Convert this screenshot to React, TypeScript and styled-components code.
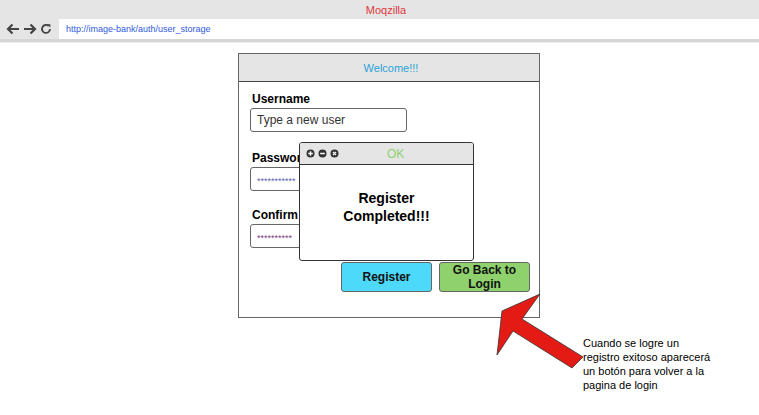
import React from 'react';
import styled, { createGlobalStyle } from 'styled-components';

const GlobalStyle = createGlobalStyle`
  html, body {
    margin: 0;
    padding: 0;
    background: #ffffff;
    font-family: "Liberation Sans", Arial, sans-serif;
  }
`;

const App: React.FC = () => {
  return (
    <>
      <GlobalStyle />
      <Browser>
        <TitleBar>Moqzilla</TitleBar>
        <NavRow>
          <NavIcons>
            <svg width="14" height="12" viewBox="0 0 14 12">
              <path d="M13 6H2M6.5 1.5L2 6l4.5 4.5" stroke="#444" strokeWidth="2.2" fill="none" />
            </svg>
            <svg width="14" height="12" viewBox="0 0 14 12">
              <path d="M1 6h11M7.5 1.5L12 6l-4.5 4.5" stroke="#444" strokeWidth="2.2" fill="none" />
            </svg>
            <svg width="12" height="12" viewBox="0 0 12 12">
              <path d="M10 6a4 4 0 1 1-1.3-3" stroke="#444" strokeWidth="1.8" fill="none" />
              <path d="M7 1.2h3.4v3.4z" fill="#444" />
            </svg>
          </NavIcons>
          <AddressField>http://image-bank/auth/user_storage</AddressField>
        </NavRow>
        <ChromeEdge />
        <Page>
          <Card>
            <CardHeader>Welcome!!!</CardHeader>
            <Form>
              <Label>Username</Label>
              <Field>Type a new user</Field>
              <Label $top={19}>Password</Label>
              <Field $mask="#5a5fb0">***********</Field>
              <Label $top={17}>Confirm Password</Label>
              <Field $mask="#7a3a80">**********</Field>
              <Actions>
                <ActionButton $bg="#4dd9fa">Register</ActionButton>
                <ActionButton $bg="#8fd16d">Go Back to<br />Login</ActionButton>
              </Actions>
            </Form>
            <Modal>
              <ModalHeader>
                <WindowDots>
                  <svg width="34" height="9" viewBox="0 0 34 9">
                    <circle cx="4.5" cy="4.5" r="4" fill="#333" />
                    <path d="M4.5 2.2v4.6M2.2 4.5h4.6" stroke="#fff" strokeWidth="1.4" />
                    <circle cx="16.5" cy="4.5" r="4" fill="#333" />
                    <path d="M14.2 4.5h4.6" stroke="#fff" strokeWidth="1.4" />
                    <circle cx="28.5" cy="4.5" r="4" fill="#333" />
                    <path d="M26.9 2.9l3.2 3.2M30.1 2.9l-3.2 3.2" stroke="#fff" strokeWidth="1.3" />
                  </svg>
                </WindowDots>
                <ModalTitle>OK</ModalTitle>
              </ModalHeader>
              <ModalBody>Register<br />Completed!!!</ModalBody>
            </Modal>
          </Card>
          <Arrow width="100" height="90" viewBox="490 285 100 90">
            <polygon
              points="540,294 522,319 583,357 572,368 513,331 497,355 502,311"
              fill="#e31b14"
              stroke="#333"
              strokeWidth="0.8"
              strokeLinejoin="miter"
            />
          </Arrow>
          <Note>
            Cuando se logre un<br />
            registro exitoso aparecerá<br />
            un botón para volver a la<br />
            pagina de login
          </Note>
        </Page>
      </Browser>
    </>
  );
};

const Browser = styled.div`
  width: 759px;
  height: 415px;
  display: flex;
  flex-direction: column;
  overflow: hidden;
`;

const TitleBar = styled.div`
  height: 19px;
  background: #e5e5e5;
  color: #e0383d;
  font-size: 11px;
  display: flex;
  align-items: center;
  justify-content: center;
  padding-left: 13px;
`;

const NavRow = styled.div`
  height: 20px;
  background: #e5e5e5;
  display: flex;
  align-items: stretch;
`;

const NavIcons = styled.div`
  width: 59px;
  display: flex;
  align-items: center;
  gap: 3px;
  padding-left: 6px;
  box-sizing: border-box;
`;

const AddressField = styled.div`
  flex: 1;
  background: #ffffff;
  color: #2f5be0;
  font-size: 9px;
  display: flex;
  align-items: center;
  padding-left: 7px;
`;

const ChromeEdge = styled.div`
  height: 3px;
  background: #d6d6d6;
  border-bottom: 1px solid #ececec;
`;

const Page = styled.div`
  position: relative;
  flex: 1;
  padding: 10px 0 0 238px;
`;

const Card = styled.div`
  position: relative;
  width: 302px;
  height: 265px;
  box-sizing: border-box;
  border: 1px solid #666;
  display: flex;
  flex-direction: column;
`;

const CardHeader = styled.div`
  height: 27px;
  background: #e5e5e5;
  border-bottom: 1px solid #444;
  color: #2aa3d8;
  font-size: 11px;
  display: flex;
  align-items: center;
  justify-content: center;
  padding-left: 4px;
`;

const Form = styled.div`
  display: flex;
  flex-direction: column;
  align-items: flex-start;
  padding: 10px 0 0 11px;
`;

const Label = styled.div<{ $top?: number }>`
  font-size: 12px;
  font-weight: bold;
  color: #000;
  margin-top: ${(p) => p.$top ?? 0}px;
  margin-left: 2px;
  height: 14px;
`;

const Field = styled.div<{ $mask?: string }>`
  width: 157px;
  height: 24px;
  box-sizing: border-box;
  margin-top: 2px;
  border: 1px solid #666;
  border-radius: 3px;
  padding-left: 6px;
  display: flex;
  align-items: center;
  font-size: ${(p) => (p.$mask ? '9px' : '12px')};
  color: ${(p) => p.$mask ?? '#333'};
  padding-top: ${(p) => (p.$mask ? '4px' : '0')};
`;

const Actions = styled.div`
  display: flex;
  gap: 7px;
  margin-top: 14px;
  margin-left: 91px;
`;

const ActionButton = styled.div<{ $bg: string }>`
  width: 91px;
  height: 30px;
  box-sizing: border-box;
  background: ${(p) => p.$bg};
  border: 1px solid #666;
  border-radius: 3px;
  font-size: 12px;
  font-weight: bold;
  line-height: 14px;
  color: #111;
  display: flex;
  align-items: center;
  justify-content: center;
  text-align: center;
`;

const Modal = styled.div`
  position: absolute;
  left: 60px;
  top: 88px;
  width: 175px;
  height: 119px;
  box-sizing: border-box;
  border: 1px solid #333;
  border-radius: 3px;
  background: #fff;
  display: flex;
  flex-direction: column;
  overflow: hidden;
`;

const ModalHeader = styled.div`
  height: 21px;
  background: #e5e5e5;
  border-bottom: 1px solid #333;
  display: flex;
  align-items: center;
  padding-left: 6px;
  flex-shrink: 0;
`;

const WindowDots = styled.div`
  display: flex;
  align-items: center;
`;

const ModalTitle = styled.div`
  color: #8fd16d;
  font-size: 12px;
  margin-left: 47px;
`;

const ModalBody = styled.div`
  flex: 1;
  display: flex;
  align-items: center;
  justify-content: center;
  text-align: center;
  font-size: 14px;
  font-weight: bold;
  line-height: 18px;
  color: #000;
  padding-bottom: 12px;
`;

const Arrow = styled.svg`
  position: absolute;
  left: 490px;
  top: 242px;
`;

const Note = styled.div`
  position: absolute;
  left: 583px;
  top: 293px;
  font-size: 11px;
  line-height: 14px;
  color: #000;
`;

export default App;
